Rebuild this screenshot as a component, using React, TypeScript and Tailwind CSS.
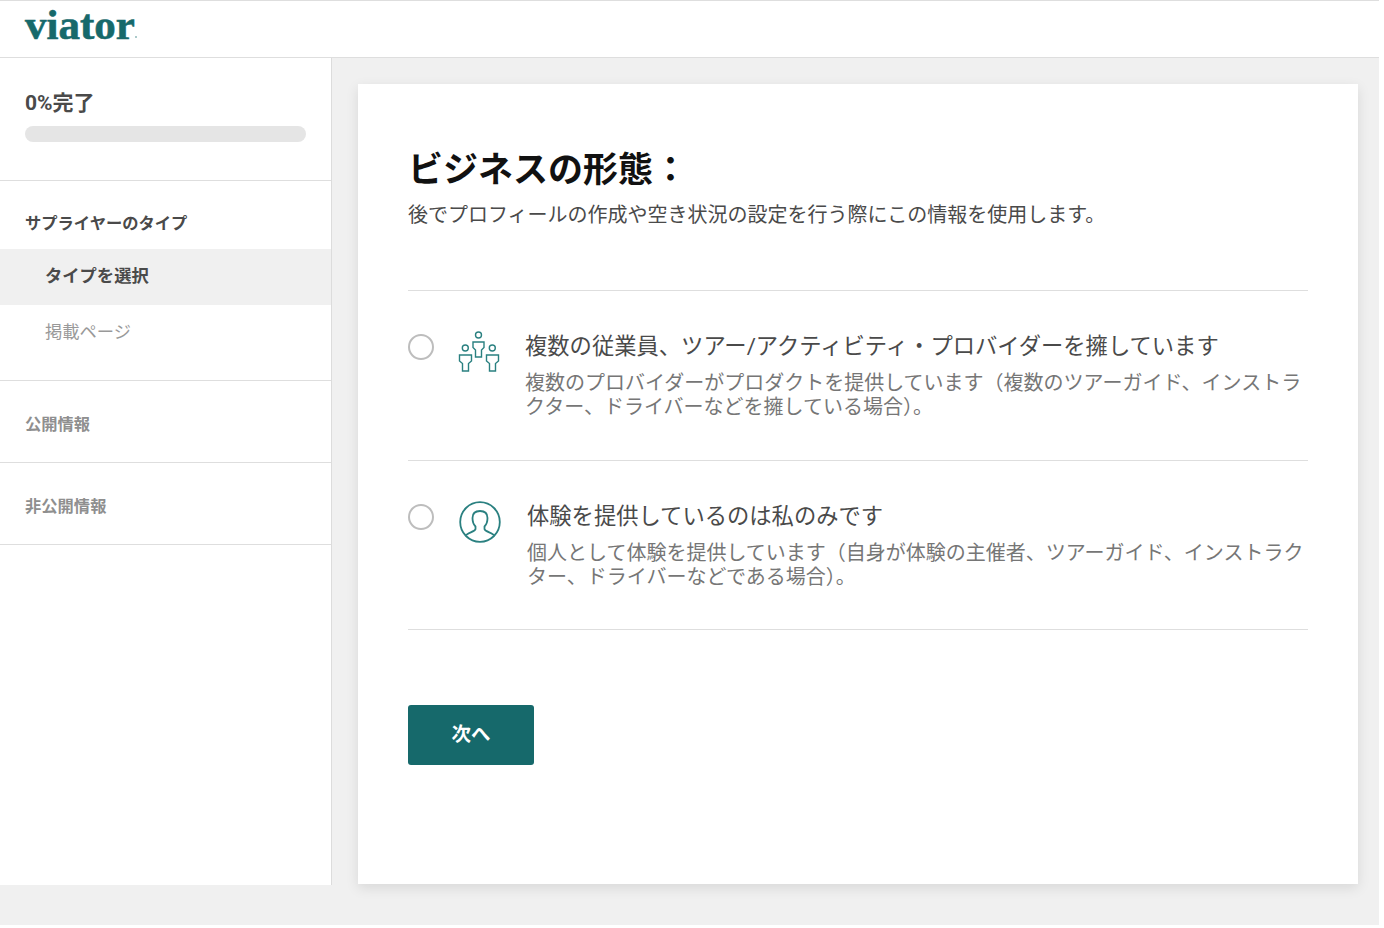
const jp = "font-['Roboto','Noto_Sans_CJK_JP',sans-serif]";

const GroupIcon = () => (
  <svg width="42" height="42" viewBox="0 0 42 42" fill="none" stroke="#2a8080" strokeWidth="1.400">
    <circle cx="20.500" cy="4" r="3" />
    <path d="M15 11h11v5.500l-2.500 2.500v7h-6v-7L15 16.500z" />
    <circle cx="7.300" cy="17" r="3" />
    <path d="M1.500 24h12v6l-3 2.500V40h-6v-7.500l-3-2.500z" />
    <circle cx="34.300" cy="17" r="3" />
    <path d="M28.500 24h12v6l-3 2.500V40h-6v-7.500l-3-2.500z" />
  </svg>
);

const PersonIcon = () => (
  <svg width="42" height="42" viewBox="0 0 42 42" fill="none" stroke="#2a8080" strokeWidth="1.800">
    <circle cx="21" cy="21" r="19.800" />
    <path d="M7 34.500c1-3 9-3.500 9.500-6.500v-2.500c-2-2-3-5-3-8.500 0-4.500 3-7 7.500-7s7.500 2.500 7.500 7c0 3.500-1 6.500-3 8.500V28c.5 3 8.500 3.500 9.500 6.500" />
  </svg>
);

const options = [
  {
    icon: <GroupIcon />,
    iconClass: "ml-[24px]",
    textClass: "ml-[25px]",
    title: "複数の従業員、ツアー/アクティビティ・プロバイダーを擁しています",
    body: "複数のプロバイダーがプロダクトを提供しています（複数のツアーガイド、インストラクター、ドライバーなどを擁している場合）。",
  },
  {
    icon: <PersonIcon />,
    iconClass: "ml-[25px]",
    textClass: "ml-[26px]",
    title: "体験を提供しているのは私のみです",
    body: "個人として体験を提供しています（自身が体験の主催者、ツアーガイド、インストラクター、ドライバーなどである場合）。",
  },
];

export default function App() {
  return (
    <div className={`${jp} w-[1379px] h-[925px] bg-[#f0f0f0] border-t border-[#dedede] flex flex-col`}>
      <header className="h-[57px] shrink-0 bg-white border-b border-[#dedede] pl-[25px] flex items-start">
        <div className="font-['Liberation_Serif',serif] font-bold text-[#16696b] text-[43px] leading-[47px] [-webkit-text-stroke:0.6px_#16696b]">viator</div>
        <div className="mt-[35px] size-[2px] rounded-full bg-[#8fb8b8]" />
      </header>
      <div className="flex items-start">
        <aside className="w-[332px] h-[827px] shrink-0 bg-white border-r border-[#dcdcdc]">
          <div className="h-[123px] border-b border-[#dedede] px-[25px] pt-[32px]">
            <div className="text-[21px] leading-[26px] font-bold text-[#4a4a4a]">0%完了</div>
            <div className="mt-[10px] h-4 w-[281px] rounded-full bg-[#e5e5e5]" />
          </div>
          <div className="h-[200px] border-b border-[#dedede] pt-[32px]">
            <div className="px-[25px] text-[16.300px] leading-[22px] font-bold text-[#4a4a4a]">サプライヤーのタイプ</div>
            <div className="mt-[14px] h-[56px] bg-[#f0f0f0] pl-[45px] text-[17.300px] leading-[54px] font-bold text-[#4a4a4a]">タイプを選択</div>
            <div className="h-[55px] pl-[45px] text-[17.300px] leading-[55px] text-[#999999]">掲載ページ</div>
          </div>
          <div className="h-[82px] border-b border-[#dedede] px-[25px] text-[16.300px] leading-[88px] font-bold text-[#8f8f8f]">公開情報</div>
          <div className="h-[82px] border-b border-[#dedede] px-[25px] text-[16.300px] leading-[88px] font-bold text-[#8f8f8f]">非公開情報</div>
        </aside>
        <main className="ml-[26px] mt-[26px] w-[1000px] h-[800px] bg-white shadow-[0_4px_12px_rgba(0,0,0,0.1)] px-[50px] pt-[62px]">
          <h1 className="text-[35px] leading-[50px] font-bold text-[#111111]">ビジネスの形態：</h1>
          <p className="mt-[5px] text-[20px] leading-[28px] text-[#4a4a4a]">後でプロフィールの作成や空き状況の設定を行う際にこの情報を使用します。</p>
          <div className="mt-[61px] border-t border-[#dedede]">
            {options.map((o) => (
              <div key={o.title} className="h-[169.500px] border-b border-[#dedede] flex items-start pt-[40px]">
                <div className="mt-[3px] size-[26px] shrink-0 rounded-full border-2 border-[#bdbdbd] bg-white" />
                <div className={`${o.iconClass} shrink-0`}>{o.icon}</div>
                <div className={o.textClass}>
                  <div className="text-[22.300px] leading-[30px] text-[#4a4a4a]">{o.title}</div>
                  <div className="mt-[10px] text-[20px] leading-[24px] text-[#767676]">{o.body}</div>
                </div>
              </div>
            ))}
          </div>
          <button className="mt-[75px] block w-[126px] h-[60px] rounded-[3px] bg-[#16696b] text-white text-[19.500px] font-bold">次へ</button>
        </main>
      </div>
      <div className="fixed top-0 right-0 bottom-0 w-[5px] bg-white" />
    </div>
  );
}
